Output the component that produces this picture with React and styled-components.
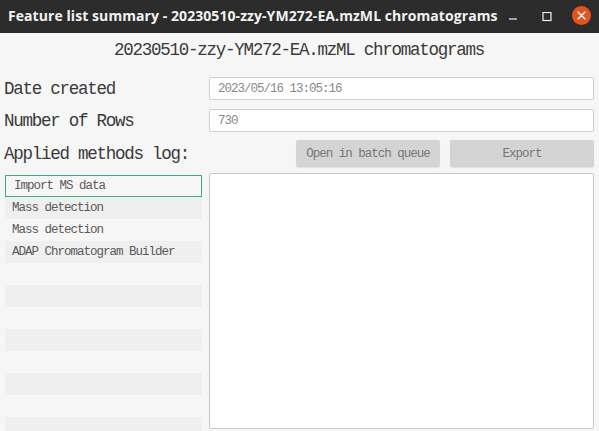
import React from "react";
import styled, { createGlobalStyle } from "styled-components";

const Global = createGlobalStyle`
  html, body { margin: 0; padding: 0; background: #f6f6f6; }
  body { width: 599px; height: 431px; overflow: hidden; }
`;

const mono = "'Liberation Mono', 'DejaVu Sans Mono', monospace";

const Window = styled.div`
  width: 599px;
  height: 431px;
  display: flex;
  flex-direction: column;
  background: #f6f6f6;
  overflow: hidden;
`;

const TitleBar = styled.div`
  height: 33px;
  flex: none;
  background: #2c2c2c;
  display: flex;
  align-items: center;
  padding: 0 1px 0 8px;
`;

const TitleText = styled.div`
  flex: 1;
  min-width: 0;
  color: #f2f2f2;
  font-family: "Open Sans", "Noto Sans", sans-serif;
  font-weight: 700;
  font-size: 14px;
  letter-spacing: 0.07px;
  white-space: nowrap;
  margin-top: -2px;
`;

const Controls = styled.div`
  flex: none;
  display: flex;
  align-items: center;
`;

const CtrlButton = styled.div`
  width: 34px;
  height: 22px;
  display: flex;
  align-items: center;
  justify-content: center;
`;

const CloseCircle = styled.div`
  width: 19px;
  height: 19px;
  border-radius: 50%;
  background: #e6531f;
  display: flex;
  align-items: center;
  justify-content: center;
  margin-top: -2px;
`;

const Content = styled.div`
  flex: 1;
  display: flex;
  flex-direction: column;
  padding: 0 5px 0 4px;
  min-height: 0;
`;

const Header = styled.div`
  height: 34px;
  display: flex;
  align-items: center;
  justify-content: center;
  font-family: ${mono};
  font-size: 17.5px;
  letter-spacing: -1.25px;
  color: #3a3a3a;
`;

const Form = styled.div`
  margin-top: 10px;
  display: grid;
  grid-template-columns: 205px 1fr;
  row-gap: 9px;
  align-items: center;
`;

const Label = styled.div`
  font-family: ${mono};
  font-size: 17.5px;
  letter-spacing: -1.25px;
  color: #3a3a3a;
  white-space: nowrap;
`;

const Field = styled.div`
  height: 21px;
  background: #fff;
  border: 1px solid #cfcfcf;
  border-radius: 2px;
  display: flex;
  align-items: center;
  padding: 0 8px;
  font-family: ${mono};
  font-size: 12.5px;
  letter-spacing: -1px;
  color: #8a8a8a;
`;

const ButtonRow = styled.div`
  display: flex;
  justify-content: flex-end;
  gap: 10px;
  margin-top: -1px;
`;

const Button = styled.div`
  width: 144px;
  height: 27px;
  background: #d4d4d4;
  border-radius: 2px;
  box-shadow: 0 1px 1px rgba(0, 0, 0, 0.08);
  display: flex;
  align-items: center;
  justify-content: center;
  font-family: ${mono};
  font-size: 12.5px;
  letter-spacing: -1px;
  color: #777;
`;

const Lower = styled.div`
  flex: 1;
  min-height: 0;
  margin-top: 6px;
  display: grid;
  grid-template-columns: 205px 1fr;
`;

const List = styled.div`
  padding: 2px 7px 0 1px;
  overflow: hidden;
  display: flex;
  flex-direction: column;
`;

const Item = styled.div`
  height: 22px;
  flex: none;
  box-sizing: border-box;
  display: flex;
  align-items: center;
  padding-left: ${(p) => (p.$selected ? "8px" : "7px")};
  background: ${(p) => (p.$odd ? "#efefef" : "#f6f6f6")};
  border: ${(p) => (p.$selected ? "1px solid #3fae7f" : "none")};
  font-family: ${mono};
  font-size: 12.5px;
  letter-spacing: -1px;
  color: #5a5a5a;
  white-space: nowrap;
`;

const TextArea = styled.div`
  background: #fff;
  border: 1px solid #c9c9c9;
  border-radius: 2px;
  margin-bottom: 2px;
`;

const items = [
  "Import MS data",
  "Mass detection",
  "Mass detection",
  "ADAP Chromatogram Builder",
  "", "", "", "", "", "", "", "", "",
];

export default function App() {
  return (
    <>
      <Global />
      <Window>
        <TitleBar>
          <TitleText>Feature list summary - 20230510-zzy-YM272-EA.mzML chromatograms</TitleText>
          <Controls>
            <CtrlButton>
              <svg width="10" height="10" viewBox="0 0 10 10">
                <line x1="1" y1="7" x2="9" y2="7" stroke="#f0f0f0" strokeWidth="1.2" />
              </svg>
            </CtrlButton>
            <CtrlButton>
              <svg width="10" height="10" viewBox="0 0 10 10">
                <rect x="1" y="0.5" width="8" height="8" fill="none" stroke="#f0f0f0" strokeWidth="1.2" />
              </svg>
            </CtrlButton>
            <CtrlButton>
              <CloseCircle>
                <svg width="9" height="9" viewBox="0 0 9 9">
                  <path d="M1 1 L8 8 M8 1 L1 8" stroke="#fff" strokeWidth="1.4" strokeLinecap="round" />
                </svg>
              </CloseCircle>
            </CtrlButton>
          </Controls>
        </TitleBar>
        <Content>
          <Header>20230510-zzy-YM272-EA.mzML chromatograms</Header>
          <Form>
            <Label>Date created</Label>
            <Field>2023/05/16 13:05:16</Field>
            <Label>Number of Rows</Label>
            <Field>730</Field>
            <Label>Applied methods log:</Label>
            <ButtonRow>
              <Button>Open in batch queue</Button>
              <Button>Export</Button>
            </ButtonRow>
          </Form>
          <Lower>
            <List>
              {items.map((t, i) => (
                <Item key={i} $odd={i % 2 === 1} $selected={i === 0}>
                  {t}
                </Item>
              ))}
            </List>
            <TextArea />
          </Lower>
        </Content>
      </Window>
    </>
  );
}
